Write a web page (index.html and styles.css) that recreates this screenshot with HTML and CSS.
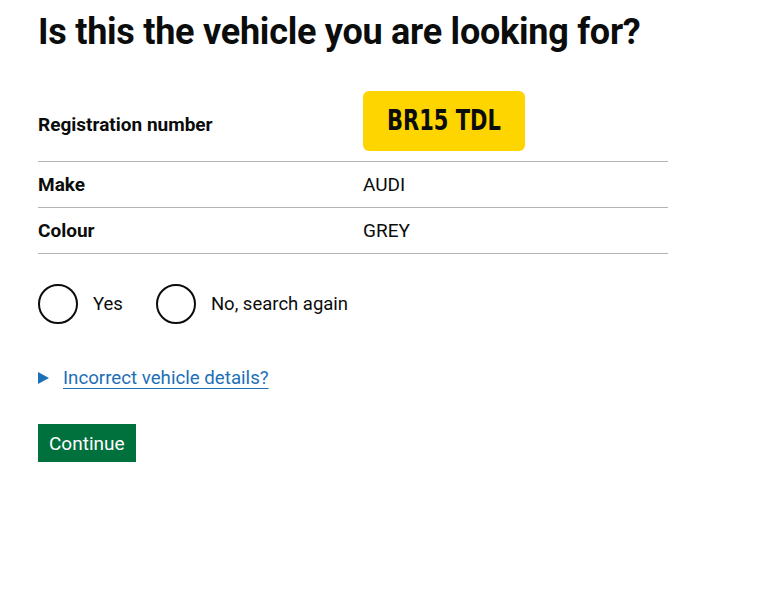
FILE: index.html
```html
<!DOCTYPE html>
<html lang="en">
<head>
<meta charset="utf-8">
<title>Is this the vehicle you are looking for?</title>
<link rel="stylesheet" href="styles.css">
</head>
<body>
<main class="page">
  <h1 class="heading">Is this the vehicle you are looking for?</h1>
  <dl class="summary">
    <div class="row row-reg">
      <dt class="key">Registration number</dt>
      <dd class="value"><span class="plate"><span class="plate-text">BR15 TDL</span></span></dd>
    </div>
    <div class="row">
      <dt class="key">Make</dt>
      <dd class="value">AUDI</dd>
    </div>
    <div class="row">
      <dt class="key">Colour</dt>
      <dd class="value">GREY</dd>
    </div>
  </dl>
  <div class="radios">
    <label class="radio"><span class="circle"></span><span class="radio-label">Yes</span></label>
    <label class="radio"><span class="circle"></span><span class="radio-label">No, search again</span></label>
  </div>
  <div class="details">
    <span class="arrow"></span>
    <a class="details-link" href="#">Incorrect vehicle details?</a>
  </div>
  <button class="button" type="button">Continue</button>
</main>
</body>
</html>
```
FILE: styles.css
```css
html, body {
  margin: 0;
  padding: 0;
  background: #ffffff;
}
body {
  font-family: Roboto, "Liberation Sans", sans-serif;
  color: #0b0c0c;
}
.page {
  padding: 0 38px;
  width: 630px;
}
.heading {
  margin: 0;
  padding-top: 12px;
  font-size: 36px;
  line-height: 40px;
  font-weight: 700;
  letter-spacing: -0.25px;
}
.summary {
  margin: 38px 0 0 0;
  padding: 0;
}
.row {
  display: flex;
  align-items: center;
  border-bottom: 1px solid #b1b4b6;
  min-height: 45px;
}
.row-reg {
  height: 71px;
  align-items: flex-start;
}
.row-reg .key {
  padding-top: 24px;
}
.row-reg .value {
  padding-top: 1px;
}
.key {
  width: 325px;
  margin: 0;
  font-weight: 700;
  font-size: 19px;
  line-height: 22px;
}
.value {
  margin: 0;
  font-size: 19px;
  line-height: 22px;
}
.plate {
  display: flex;
  align-items: center;
  justify-content: center;
  width: 162px;
  height: 60px;
  background: #ffd500;
  border-radius: 6px;
}
.plate-text {
  display: inline-block;
  font-family: "DejaVu Sans", sans-serif;
  font-weight: 700;
  font-size: 28px;
  line-height: 32px;
  transform: scaleX(0.75);
}
.radios {
  display: flex;
  gap: 33px;
  margin-top: 30px;
}
.radio {
  display: flex;
  align-items: center;
  gap: 15px;
  font-size: 18.5px;
}
.circle {
  width: 36px;
  height: 36px;
  border: 2px solid #0b0c0c;
  border-radius: 50%;
}
.details {
  display: flex;
  align-items: center;
  margin-top: 43px;
  gap: 14px;
}
.arrow {
  width: 0;
  height: 0;
  border-top: 6px solid transparent;
  border-bottom: 6px solid transparent;
  border-left: 11px solid #1d70b8;
}
.details-link {
  color: #1d70b8;
  font-size: 18.7px;
  text-decoration: underline;
  text-underline-offset: 4px;
  text-decoration-thickness: 1px;
}
.button {
  display: block;
  margin-top: 35px;
  padding: 0 11px;
  height: 38px;
  background: #00703c;
  color: #ffffff;
  border: none;
  border-radius: 0;
  box-shadow: 0 2px 0 #002d18;
  font-family: Roboto, "Liberation Sans", sans-serif;
  font-size: 19px;
}
```
